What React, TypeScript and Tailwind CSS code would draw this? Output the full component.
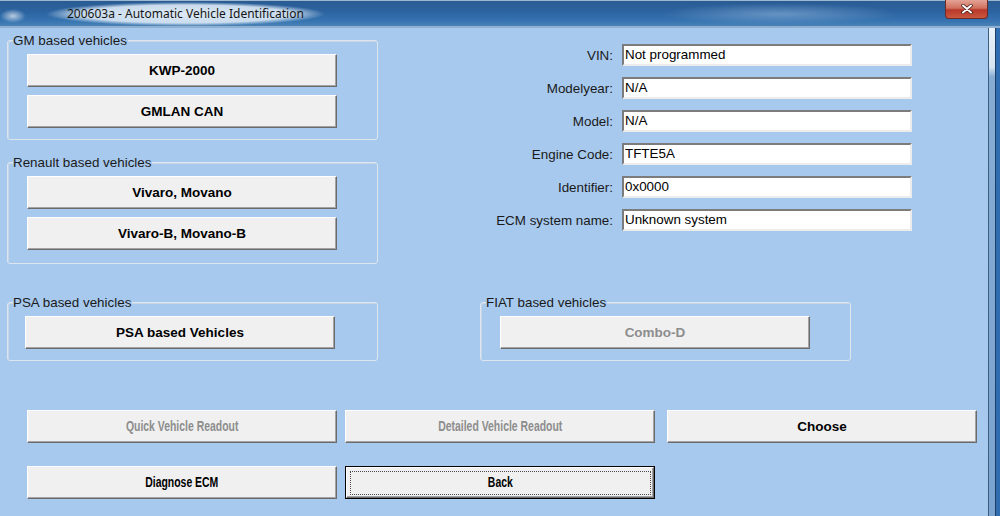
import type { ReactNode } from "react";

const CLIENT = "bg-[#a7c9ee]";

type BtnProps = {
  children: ReactNode;
  disabled?: boolean;
  focused?: boolean;
  narrow?: boolean;
};

const Btn = ({ children, disabled, focused, narrow }: BtnProps) => (
  <button
    className={`h-[33px] w-[310px] shrink-0 ${focused ? "border border-black" : ""}`}
  >
    <div className="h-full w-full bg-[#f0f0f0] border border-t-white border-l-white border-r-[#6b6b6b] border-b-[#6b6b6b] shadow-[inset_-1px_-1px_0_#a3a3a3] flex items-center justify-center">
      <div
        className={`flex items-center justify-center ${focused ? "h-[calc(100%-5px)] w-[calc(100%-5px)] border border-dotted border-[#4a4a4a]" : "h-full w-full"}`}
      >
        <span
          className={`inline-block font-bold leading-none whitespace-nowrap ${disabled ? "text-[#8d8d8d]" : "text-black"} ${narrow ? "text-[14.5px] scale-x-[0.72]" : "text-[13.5px]"}`}
        >
          {children}
        </span>
      </div>
    </div>
  </button>
);

const Group = ({ label, children }: { label: string; children: ReactNode }) => (
  <div className="relative w-[371px] border border-[#dde6ef] rounded-[3px] shadow-[inset_1px_1px_0_#c7d6e6]">
    <span className={`absolute -top-[8px] left-[5px] ${CLIENT} pr-[1px] text-[13.4px] leading-[16px] text-[#1a1a1a]`}>
      {label}
    </span>
    {children}
  </div>
);

const fields: [string, string][] = [
  ["VIN:", "Not programmed"],
  ["Modelyear:", "N/A"],
  ["Model:", "N/A"],
  ["Engine Code:", "TFTE5A"],
  ["Identifier:", "0x0000"],
  ["ECM system name:", "Unknown system"],
];

export default function App() {
  return (
    <div
      className="w-[1000px] h-[516px] flex flex-col overflow-hidden"
      style={{ fontFamily: '"Liberation Sans", Arial, sans-serif' }}
    >
      {/* title bar */}
      <div className="relative h-[28px] shrink-0 flex items-start bg-[linear-gradient(180deg,#2a5c93_0%,#2c64a1_45%,#3674b1_80%,#4a82b6_100%)] border-t border-t-[#9fb8d2] border-b-2 border-b-[#8fb0d0]">
        <div className="absolute left-0 top-[8px] h-[14px] w-[26px] bg-[radial-gradient(ellipse_at_center,#b7cbe0_0%,rgba(160,190,220,0)_70%)]" />
        <div className="absolute left-[660px] top-[2px] h-[22px] w-[240px] bg-[radial-gradient(ellipse_at_center,rgba(170,200,232,0.45)_0%,rgba(170,200,232,0)_70%)]" />
        <div className="ml-[46px] mt-[1px] h-[24px] px-[21px] flex items-center bg-[radial-gradient(closest-side,rgba(228,238,247,0.97)_0%,rgba(214,229,243,0.92)_75%,rgba(180,205,232,0)_100%)]">
          <span
            className="text-[12px] text-[#151515] whitespace-nowrap"
            style={{ fontFamily: '"Noto Sans", "Open Sans", sans-serif' }}
          >
            200603a - Automatic Vehicle Identification
          </span>
        </div>
        <div className="ml-auto mr-[12px] -mt-px h-[19px] w-[43px] rounded-b-[4px] border border-[#6e2a24] border-t-0 bg-[linear-gradient(180deg,#e3a496_0%,#d1705f_45%,#b8392a_55%,#c9573f_100%)] flex items-center justify-center">
          <svg width="12" height="10" viewBox="0 0 12 10">
            <path d="M2 1.5 L10 8.5 M10 1.5 L2 8.5" stroke="#3a1410" strokeWidth="3.4" strokeLinecap="round" />
            <path d="M2 1.5 L10 8.5 M10 1.5 L2 8.5" stroke="#ffffff" strokeWidth="2" strokeLinecap="round" />
          </svg>
        </div>
      </div>

      <div className="flex flex-1 min-h-0">
        {/* client area */}
        <div className={`flex-1 ${CLIENT} flex flex-col`}>
          <div className="flex">
            <div className="ml-[7px] mt-[12px] flex flex-col gap-[22px]">
              <Group label="GM based vehicles">
                <div className="pl-[19px] pt-[13px] pb-[11px] flex flex-col gap-[8px]">
                  <Btn>KWP-2000</Btn>
                  <Btn>GMLAN CAN</Btn>
                </div>
              </Group>
              <Group label="Renault based vehicles">
                <div className="pl-[19px] pt-[13px] pb-[13px] flex flex-col gap-[8px]">
                  <Btn>Vivaro, Movano</Btn>
                  <Btn>Vivaro-B, Movano-B</Btn>
                </div>
              </Group>
            </div>

            <div className="mt-[16px] grid grid-cols-[235px_290px] gap-x-[9px] gap-y-[11px] auto-rows-[22px] text-[13.4px]">
              {fields.map(([label, value]) => (
                <div key={label} className="contents">
                  <div className="flex items-center justify-end pt-[3px] text-[#1a1a1a]">{label}</div>
                  <div className="bg-white border-2 border-t-[#7c7c7c] border-l-[#7c7c7c] border-r-[#ececec] border-b-[#ececec] flex items-center pl-[1px] text-black leading-none whitespace-nowrap">
                    {value}
                  </div>
                </div>
              ))}
            </div>
          </div>

          <div className="mt-[38px] flex">
            <div className="ml-[7px]">
              <Group label="PSA based vehicles">
                <div className="pl-[17px] pt-[13px] pb-[11px]">
                  <Btn>PSA based Vehicles</Btn>
                </div>
              </Group>
            </div>
            <div className="ml-[102px]">
              <Group label="FIAT based vehicles">
                <div className="pl-[19px] pt-[13px] pb-[11px]">
                  <Btn disabled>Combo-D</Btn>
                </div>
              </Group>
            </div>
          </div>

          <div className="mt-[49px] ml-[27px] flex flex-col gap-[23px]">
            <div className="flex">
              <Btn disabled narrow>Quick Vehicle Readout</Btn>
              <div className="ml-[8px]">
                <Btn disabled narrow>Detailed Vehicle Readout</Btn>
              </div>
              <div className="ml-[12px]">
                <Btn>Choose</Btn>
              </div>
            </div>
            <div className="flex gap-[8px]">
              <Btn narrow>Diagnose ECM</Btn>
              <Btn narrow focused>Back</Btn>
            </div>
          </div>
        </div>

        {/* right window frame */}
        <div className="w-[12px] shrink-0 flex">
          <div className="w-px bg-[#3b5d80]" />
          <div className="w-[6px] bg-[linear-gradient(180deg,#e9f1f9_0%,#d6e5f3_8%,#86acd4_10%,#7aa3cf_100%)]" />
          <div className="w-px bg-[#1d3f66]" />
          <div className="flex-1 bg-[#2f6db0]" />
        </div>
      </div>
    </div>
  );
}
